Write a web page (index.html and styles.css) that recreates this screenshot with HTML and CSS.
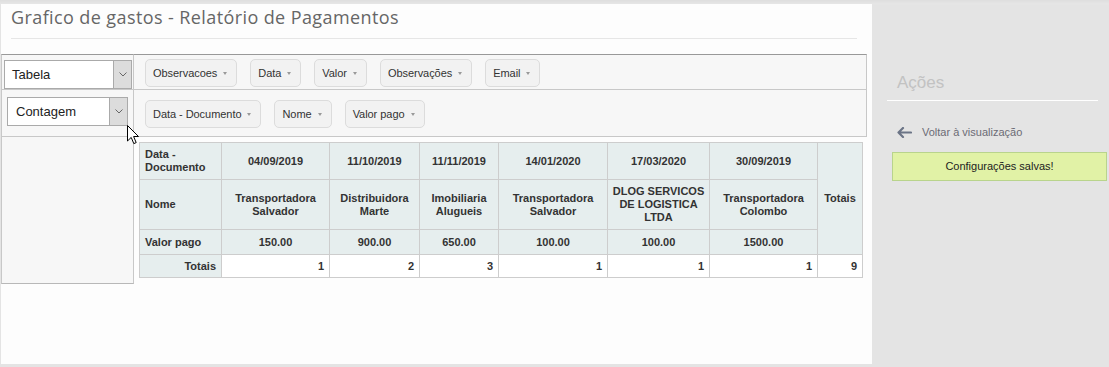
FILE: index.html
```html
<!DOCTYPE html>
<html lang="pt-BR">
<head>
    <meta charset="UTF-8">
    <meta name="viewport" content="width=device-width, initial-scale=1.0">
    <title>Grafico de gastos - Relatório de Pagamentos</title>
    <link rel="stylesheet" href="styles.css">
</head>
<body>

    <div class="frame">
        <main class="report">
            <h1 class="report-title">Grafico de gastos - Relatório de Pagamentos</h1>
            <hr class="report-rule">

            <div class="pvt-ui">
                <!-- renderer select -->
                <div class="pvt-cell pvt-left">
                    <div class="fake-select select-renderer">
                        <span class="select-text">Tabela</span>
                        <span class="select-btn"><svg width="8" height="5" viewBox="0 0 8 5"><polyline points="0.5,0.5 4,4 7.5,0.5" fill="none" stroke="#666" stroke-width="1"/></svg></span>
                    </div>
                </div>
                <div class="pvt-cell pvt-axis pvt-unused">
                    <span class="pill">Observacoes</span>
                    <span class="pill">Data</span>
                    <span class="pill">Valor</span>
                    <span class="pill">Observações</span>
                    <span class="pill">Email</span>
                </div>

                <!-- aggregator select -->
                <div class="pvt-cell pvt-left">
                    <div class="fake-select select-aggregator">
                        <span class="select-text">Contagem</span>
                        <span class="select-btn"><svg width="8" height="5" viewBox="0 0 8 5"><polyline points="0.5,0.5 4,4 7.5,0.5" fill="none" stroke="#666" stroke-width="1"/></svg></span>
                    </div>
                </div>
                <div class="pvt-cell pvt-axis pvt-cols">
                    <span class="pill">Data - Documento</span>
                    <span class="pill">Nome</span>
                    <span class="pill">Valor pago</span>
                </div>

                <div class="pvt-cell pvt-left pvt-rows"></div>
                <div class="pvt-output">
                    <table class="pvt-table">
                        <colgroup>
                            <col style="width:82px">
                            <col style="width:108px">
                            <col style="width:90px">
                            <col style="width:79px">
                            <col style="width:109px">
                            <col style="width:102px">
                            <col style="width:108px">
                            <col style="width:45px">
                        </colgroup>
                        <tr class="row-date">
                            <th class="axis-label">Data - Documento</th>
                            <th>04/09/2019</th>
                            <th>11/10/2019</th>
                            <th>11/11/2019</th>
                            <th>14/01/2020</th>
                            <th>17/03/2020</th>
                            <th>30/09/2019</th>
                            <th rowspan="3">Totais</th>
                        </tr>
                        <tr class="row-name">
                            <th class="axis-label">Nome</th>
                            <th>Transportadora Salvador</th>
                            <th>Distribuidora Marte</th>
                            <th>Imobiliaria Alugueis</th>
                            <th>Transportadora Salvador</th>
                            <th>DLOG SERVICOS DE LOGISTICA LTDA</th>
                            <th>Transportadora Colombo</th>
                        </tr>
                        <tr class="row-value">
                            <th class="axis-label">Valor pago</th>
                            <th>150.00</th>
                            <th>900.00</th>
                            <th>650.00</th>
                            <th>100.00</th>
                            <th>100.00</th>
                            <th>1500.00</th>
                        </tr>
                        <tr class="row-totals">
                            <th class="totals-label">Totais</th>
                            <td>1</td>
                            <td>2</td>
                            <td>3</td>
                            <td>1</td>
                            <td>1</td>
                            <td>1</td>
                            <td>9</td>
                        </tr>
                    </table>
                </div>
            </div>
        </main>

        <aside class="actions">
            <h2 class="actions-title">Ações</h2>
            <a class="back-link" href="#">
                <svg width="15" height="11" viewBox="0 0 15 11"><path d="M6 1 L1.5 5.5 L6 10 M1.5 5.5 H14" fill="none" stroke="#6b7486" stroke-width="2.2" stroke-linecap="round" stroke-linejoin="round"/></svg>
                <span>Voltar à visualização</span>
            </a>
            <div class="saved-msg">Configurações salvas!</div>
        </aside>

        <!-- mouse pointer captured in the screenshot -->
        <svg class="cursor" width="13" height="20" viewBox="0 0 13 20"><path d="M0.5 0.5 L0.5 16 L4.2 12.4 L6.8 18.6 L9.2 17.6 L6.6 11.5 L11.5 11.5 Z" fill="#fff" stroke="#000" stroke-width="1"/></svg>
    </div>

</body>
</html>
```

FILE: styles.css
```css
* {
    box-sizing: border-box;
}
body {
    margin: 0;
    background-color: #e4e4e4;
    font-family: "Liberation Sans", Arial, sans-serif;
    color: #333;
}
.frame {
    position: relative;
    display: flex;
    width: 1109px;
    height: 367px;
    padding: 4px 2px 3px 1px;
    background: linear-gradient(#dedede, #e6e6e6 4px, #e4e4e4 5px);
}
.report {
    width: 871px;
    background-color: #fdfdfd;
}
.report-title {
    margin: 0 0 0 10px;
    padding-top: 2px;
    font-family: "Open Sans", sans-serif;
    font-size: 18px;
    font-weight: normal;
    line-height: 23px;
    letter-spacing: 0.4px;
    color: #666;
}
.report-rule {
    margin: 9px 15px 15px 10px;
    border: 0;
    border-top: 1px solid #e6e6e6;
}

/* pivot ui */
.pvt-ui {
    display: grid;
    grid-template-columns: 133px 733px;
    grid-template-rows: 36px 47px 147px;
}
.pvt-cell {
    border-right: 1px solid #c8c8c8;
    border-bottom: 1px solid #c8c8c8;
    background-color: #f7f7f7;
}
.pvt-left {
    border-left: 1px solid #c8c8c8;
}
.pvt-unused,
.pvt-ui > .pvt-left:first-child {
    border-top: 1px solid #999;
}
.pvt-rows {
    border-bottom-color: #b8b8b8;
}
.fake-select {
    display: flex;
    height: 29px;
    border: 1px solid #aaa;
    background-color: #fff;
}
.select-renderer {
    width: 128px;
    margin: 5px 0 0 2px;
}
.select-aggregator {
    width: 121px;
    margin: 7px 0 0 5px;
}
.select-text {
    flex: 1;
    padding-left: 7px;
    font-size: 13px;
    line-height: 27px;
    color: #222;
}
.select-aggregator .select-text {
    padding-left: 8px;
}
.select-btn {
    display: flex;
    align-items: center;
    justify-content: center;
    width: 18px;
    border-left: 1px solid #aaa;
    background-color: #dcdcdc;
}
.pvt-axis {
    display: flex;
    align-items: flex-start;
    gap: 13px;
    padding-left: 11px;
}
.pvt-unused {
    padding-top: 4px;
}
.pvt-cols {
    padding-top: 10px;
}
.pill {
    display: inline-flex;
    align-items: center;
    height: 28px;
    padding: 0 9px 0 7px;
    border: 1px solid #dcdcdc;
    border-radius: 5px;
    background-color: #f2f2f2;
    font-size: 11px;
    letter-spacing: -0.05px;
    color: #333;
    white-space: nowrap;
}
.pill::after {
    content: "";
    margin-left: 6px;
    border-left: 2.5px solid transparent;
    border-right: 2.5px solid transparent;
    border-top: 3px solid #999;
}
.pvt-output {
    padding: 5px 0 0 5px;
}

/* result table */
.pvt-table {
    width: 723px;
    table-layout: fixed;
    border-collapse: collapse;
    font-size: 11px;
    font-weight: bold;
    line-height: 13px;
    color: #333;
}
.pvt-table th,
.pvt-table td {
    padding: 0 5px;
    border: 1px solid #cdcdcd;
}
.pvt-table th {
    padding: 0 2px;
    background-color: #e6eeee;
    text-align: center;
}
.pvt-table td {
    background-color: #fff;
    text-align: right;
}
.pvt-table .axis-label {
    padding-left: 5px;
    text-align: left;
}
.pvt-table .totals-label {
    padding-right: 5px;
    text-align: right;
}
.row-date {
    height: 37px;
}
.row-name {
    height: 50px;
}
.row-value {
    height: 25px;
}
.row-totals {
    height: 23px;
}

/* side panel */
.actions {
    width: 235px;
    padding-top: 69px;
}
.actions-title {
    width: 211px;
    margin: 0 0 0 15px;
    padding: 0 0 7px 10px;
    border-bottom: 1px solid #fff;
    font-size: 17px;
    font-weight: normal;
    line-height: 20px;
    color: #c2c2c2;
}
.back-link {
    display: flex;
    align-items: center;
    gap: 10px;
    height: 14px;
    margin: 24px 0 0 25px;
    font-size: 11px;
    color: #6b6b75;
    text-decoration: none;
}
.saved-msg {
    width: 215px;
    height: 29px;
    margin: 13px 0 0 20px;
    border: 1px solid #b9d48c;
    background-color: #e1f2a6;
    font-size: 11px;
    line-height: 27px;
    text-align: center;
    color: #222;
}
.cursor {
    position: absolute;
    left: 127px;
    top: 125px;
}
```
